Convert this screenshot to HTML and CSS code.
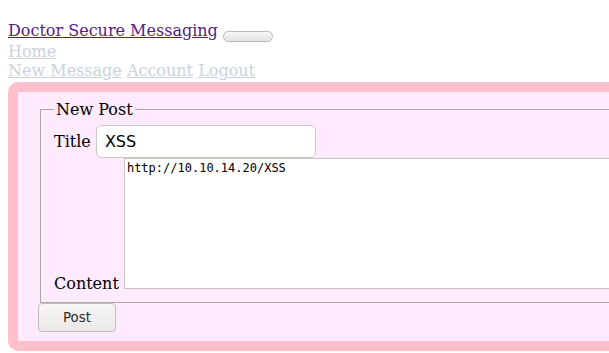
FILE: index.html
```html
<!DOCTYPE html>
<html lang="en">
<head>
  <meta charset="UTF-8" />
  <meta name="viewport" content="width=device-width, initial-scale=1.0"/>
  <title>Doctor Secure Messaging - New Post</title>
  <link rel="stylesheet" href="styles.css">
</head>
<body>
  <div class="page">
    <div class="header">
      <a class="brand" href="#">Doctor Secure Messaging</a> <button class="toggler" type="button"></button><br>
      <a class="nav-link" href="#">Home</a><br>
      <a class="nav-link" href="#">New Message</a> <a class="nav-link" href="#">Account</a> <a class="nav-link" href="#">Logout</a>
    </div>
    <div class="panel">
      <form>
        <fieldset>
          <legend>New Post</legend>
          <label for="title">Title</label> <input id="title" type="text" value="XSS"><br>
          <label for="content">Content</label> <textarea id="content">http://10.10.14.20/XSS</textarea>
        </fieldset>
        <button class="submit-btn" type="submit">Post</button>
      </form>
    </div>
  </div>
</body>
</html>
```

FILE: styles.css
```css
body {
  margin: 8px 0 0 8px;
  font-family: "DejaVu Serif", serif;
  font-size: 16px;
  color: #000;
  background: #fff;
}
.page {
  overflow-x: clip;
}
.header {
  padding-top: 13px;
}
.header a {
  text-decoration: underline;
}
.brand {
  color: #551a8b;
}
.nav-link {
  color: #c9d3dd;
}
.toggler {
  display: inline-block;
  width: 50px;
  height: 11px;
  padding: 0;
  border: 1px solid #b8b8b8;
  border-radius: 6px;
  background: linear-gradient(#f6f6f6, #e4e4e4);
  vertical-align: -5px;
}
.panel {
  width: 760px;
  margin-top: 2px;
  background: #ffeaff;
  border: 10px solid #ffc0cb;
  border-radius: 10px;
  padding: 8px 20px 9px;
}
fieldset {
  margin: 0 2px;
  border: 1px solid #a9a9a9;
  padding: 0.35em 0.75em 9px 13px;
}
legend {
  padding: 0 2px;
}
input[type="text"] {
  width: 202px;
  padding: 6px 8px;
  font-family: "DejaVu Sans", sans-serif;
  font-size: 16px;
  border: 1px solid #cdc7c2;
  border-radius: 5px;
  background: #fff;
}
textarea {
  width: 600px;
  height: 125px;
  margin: 0;
  padding: 2px;
  font-family: "DejaVu Sans Mono", monospace;
  font-size: 12px;
  border: 1px solid #c8c3c0;
  background: #fff;
  resize: none;
}
.submit-btn {
  margin-top: 0;
  padding: 6px 24px;
  font-family: "DejaVu Sans", sans-serif;
  font-size: 13.333px;
  color: #2a2a2a;
  border: 1px solid #c2beba;
  border-radius: 4px;
  background: linear-gradient(#f7f6f5, #ebe9e7);
}
```
